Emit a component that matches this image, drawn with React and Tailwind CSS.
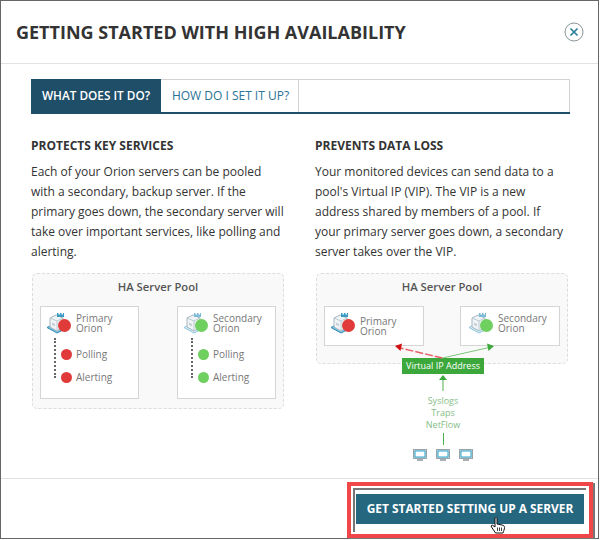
import React from "react";

function ServerIcon({ className, pale }) {
  return (
    <svg viewBox="0 0 24 21" className={className}>
      <path d="M1 14.500l10 5.500 5-2.500-10-5.500z" fill={pale ? "#d5ebf4" : "#7fc0da"} stroke={pale ? "#8ec6de" : "#2f8fb8"} strokeWidth="1" />
      <path d="M4 5l6-3 7 3v9l-6 4-7-4z" fill="#f1f4f6" stroke="#a5b6c0" strokeWidth="1" />
      <path d="M4 5l7 3 6-3M11 8v10" fill="none" stroke="#bccad1" strokeWidth="1" />
      <path d="M6 9.500l3 1.400v2.400l-3-1.400z" fill="#c5d0d6" />
      <path d="M11 0h1.500v1.500H14V0h1.500v1.500H17V0h1v4h-7z" fill={pale ? "#7dbcd8" : "#3a9bc4"} />
    </svg>
  );
}

function Monitor() {
  return (
    <svg viewBox="0 0 14 13" className="w-[14px] h-[13px]">
      <rect x="0.5" y="0.5" width="13" height="9" fill="#d8dcde" stroke="#9aa4a8" />
      <rect x="2" y="2" width="10" height="6" fill="#fff" stroke="#25a5d0" />
      <rect x="4" y="10" width="6" height="2" fill="#a9b0b3" />
    </svg>
  );
}

function ServerHead({ name, color, textClass, pale }) {
  return (
    <div className="flex items-start">
      <div className="relative w-[30px] h-[24px] shrink-0">
        <ServerIcon pale={pale} className="absolute left-0 top-0 w-[24px] h-[21px]" />
        <span className={`absolute left-[12px] top-[6px] w-[13px] h-[13px] rounded-full ${color}`} />
      </div>
      <div className={`text-[10px] leading-[10px] text-[#777] ${textClass}`}>
        {name}
        <br />
        Orion
      </div>
    </div>
  );
}

function DetailBox({ name, color, pale }) {
  return (
    <div className="w-[99px] h-[93px] border border-[#d5d5d5] bg-white pl-[5px] pt-[6px]">
      <ServerHead name={name} color={color} pale={pale} />
      <div className="flex mt-px">
        <div className="ml-[8px] h-[40px] border-l-2 border-dotted border-[#666]" />
        <div className="ml-[5px] mt-[11px] flex flex-col gap-[12px] text-[10px] leading-[11px] text-[#777]">
          <div className="flex items-center gap-[4px]">
            <span className={`block w-[11px] h-[11px] rounded-full ${color}`} />
            Polling
          </div>
          <div className="flex items-center gap-[4px]">
            <span className={`block w-[11px] h-[11px] rounded-full ${color}`} />
            Alerting
          </div>
        </div>
      </div>
    </div>
  );
}

function Pool({ height, children }) {
  return (
    <div className={`mt-[11px] ml-px w-[252px] ${height} rounded-[5px] border border-dashed border-[#dcdcdc] bg-[#f9f9f9] px-[7px]`}>
      <div className="text-center text-[11.25px] font-semibold text-[#555] leading-[16px] pt-[5px]">HA Server Pool</div>
      <div className="flex justify-between mt-[11px]">{children}</div>
    </div>
  );
}

export default function App() {
  return (
    <div className="w-[601px] h-[540px] bg-white font-['Open_Sans',sans-serif] overflow-hidden">
      <div className="relative w-[599px] h-[539px] border border-[#666] bg-white flex flex-col">
        <div className="h-[63px] border-b border-[#e2e2e2] flex items-center justify-between pl-[15px] pr-[14px] shrink-0">
          <h1 className="text-[18px] font-bold text-[#333] leading-none">GETTING STARTED WITH HIGH AVAILABILITY</h1>
          <svg viewBox="0 0 20 20" className="w-[20px] h-[20px]">
            <circle cx="10" cy="10" r="9" fill="#fff" stroke="#8a9498" strokeWidth="1" />
            <path d="M6.500 6.500l7 7M13.500 6.500l-7 7" stroke="#2a7d9e" strokeWidth="1.700" />
          </svg>
        </div>

        <div className="flex-1 px-[30px] pt-[15px]">
          <div className="flex h-[35px] w-[539px] border-b-2 border-[#1f4e68]">
            <div className="w-[130px] bg-[#1f4e68] text-white text-[11.8px] font-semibold flex items-center justify-center">WHAT DOES IT DO?</div>
            <div className="w-[138px] border-t border-r border-[#d2d2d2] text-[#2a7396] text-[12px] flex items-center justify-center pl-[2px]">HOW DO I SET IT UP?</div>
            <div className="flex-1 border-t border-r border-[#d2d2d2]" />
          </div>

          <div className="grid grid-cols-[254px_254px] gap-x-[30px] mt-[24px]">
            <div>
              <h2 className="text-[12px] font-bold text-[#333] leading-[16px]">PROTECTS KEY SERVICES</h2>
              <p className="mt-[8px] text-[12px] leading-[20px] text-[#333]">
                Each of your Orion servers can be pooled with a secondary, backup server. If the primary goes down, the secondary server will take over important services, like polling and alerting.
              </p>
              <Pool height="h-[136px]">
                <DetailBox name="Primary" color="bg-[#e03a3a]" />
                <DetailBox name="Secondary" color="bg-[#6fcf5f]" pale />
              </Pool>
            </div>

            <div className="relative">
              <h2 className="text-[12px] font-bold text-[#333] leading-[16px]">PREVENTS DATA LOSS</h2>
              <p className="mt-[8px] w-[250px] text-[12px] leading-[20px] text-[#333]">
                Your monitored devices can send data to a pool's Virtual IP (VIP). The VIP is a new address shared by members of a pool. If your primary server goes down, a secondary server takes over the VIP.
              </p>
              <Pool height="h-[91px]">
                <div className="w-[100px] h-[40px] border border-[#d5d5d5] bg-white pl-[5px] pt-[6px]">
                  <ServerHead name="Primary" color="bg-[#e03a3a]" textClass="pt-[3px]" />
                </div>
                <div className="w-[100px] h-[40px] border border-[#d5d5d5] bg-white pl-[7px] pt-[6px]">
                  <ServerHead name="Secondary" color="bg-[#6fcf5f]" pale />
                </div>
              </Pool>

              <div className="relative z-10 -mt-[6px] flex flex-col items-center w-[256px]">
                <div className="w-[82px] h-[16px] bg-[#3ca83c] text-white text-[9px] font-medium leading-[16px] text-center">Virtual IP Address</div>
                <svg viewBox="0 0 10 17" className="w-[10px] h-[17px]">
                  <path d="M5 17V3" stroke="#4caf50" strokeWidth="1" />
                  <path d="M5 1L1 6h8z" fill="#3ca83c" />
                </svg>
                <div className="mt-[4px] text-center text-[9px] leading-[12px] text-[#86bd86]">
                  Syslogs
                  <br />
                  Traps
                  <br />
                  NetFlow
                </div>
                <div className="h-[12px] w-px bg-[#4caf50] mt-[2px]" />
                <div className="flex gap-[9px] mt-[4px]">
                  <Monitor />
                  <Monitor />
                  <Monitor />
                </div>
              </div>

              <svg viewBox="0 0 254 20" className="absolute left-0 top-[202px] w-[254px] h-[20px] z-20">
                <path d="M127.500 18L85 8" stroke="#e8606a" strokeWidth="1.500" strokeDasharray="8 2" fill="none" />
                <path d="M80 6l7-2.500-1.500 7.500z" fill="#d10f0f" />
                <path d="M127.500 18L174 7.500" stroke="#7cc67c" strokeWidth="1" fill="none" />
                <path d="M179 6l-7-2.500 1.500 7.500z" fill="#3ca83c" />
              </svg>
            </div>
          </div>
        </div>

        <div className="h-[60px] border-t border-[#e2e2e2] flex justify-end shrink-0 pr-[5px] pt-[3px]">
          <div className="w-[246px] h-[56px] border-[4px] border-[#f04848] shadow-[2px_1px_0_#777] pl-[2px] pt-[2px]">
            <div className="w-[233px] h-[44px] border-l-2 border-t-2 border-[#777] pl-px pt-[4px]">
              <button className="w-[228px] h-[30px] bg-[#24677f] text-white text-[11.9px] font-bold">GET STARTED SETTING UP A SERVER</button>
            </div>
          </div>
        </div>

        <svg viewBox="0 0 16 17" className="absolute left-[489px] top-[516px] w-[16px] h-[17px]">
          <path d="M5 1c.8-.8 2-.5 2 .5v5.500l5 1c1.500.3 2.500 1 2.500 2.500 0 2-1 3.500-1.500 5.500H5.500L1.500 10c-1-1.500.5-2.500 1.500-1.500L5 10z" fill="#fff" stroke="#111" strokeWidth="1" />
          <path d="M7.500 10.500v3.500M9.500 10.500v3.500M11.500 10.500v3.500" stroke="#111" strokeWidth="0.800" />
        </svg>
      </div>
    </div>
  );
}
